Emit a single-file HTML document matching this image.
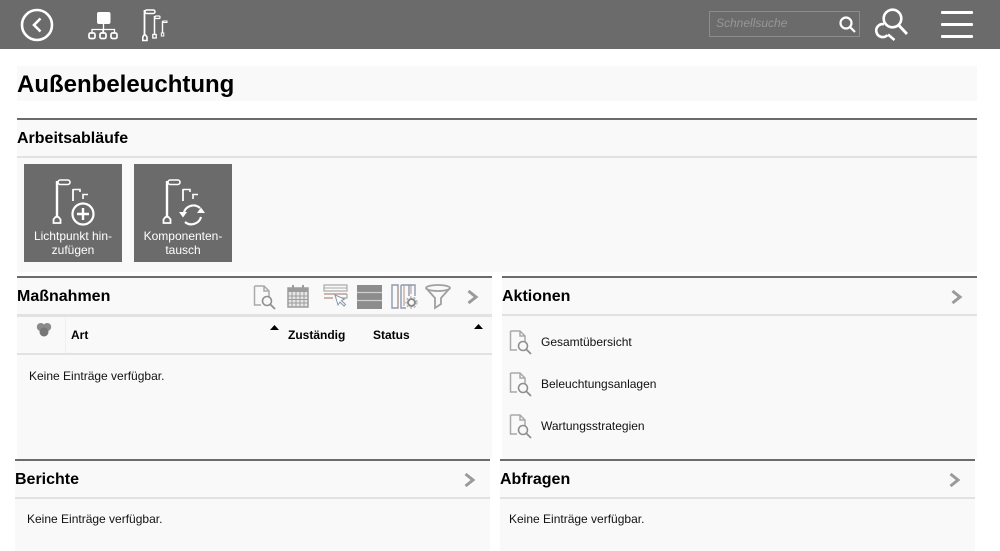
<!DOCTYPE html>
<html lang="de"><head><meta charset="utf-8"><title>Außenbeleuchtung</title>
<style>
html,body{margin:0;padding:0;background:#fff;width:1000px;height:551px;overflow:hidden}
body{position:relative;font-family:"Liberation Sans",sans-serif;color:#000}
div,span,svg{position:absolute}
svg{overflow:visible;fill:none}
.band{background:#f9f9f9}
.dk{background:#6b6b6b}
.lt{background:#e2e2e2}
.h{font-weight:bold;font-size:16px;line-height:20px;white-space:nowrap}
.t{font-size:12px;line-height:14px;white-space:nowrap;color:#111}
.th{font-size:12px;font-weight:bold;line-height:14px;white-space:nowrap}
.btn{background:#6b6b6b;width:98px;height:98px;top:164px;color:#fff;font-size:12px;line-height:14px;text-align:center}
.btn span{left:0;width:98px;top:65px}
.w{stroke:#fff;stroke-width:2}
</style></head><body>
<svg width="0" height="0" style="left:0;top:0">
<defs>
<g id="doc"><path d="M1.500 1H11L16 6V12M11 1V6H16M8 20H1.500V1" stroke="#a9a9ad" stroke-width="1.500" fill="none"/><circle cx="14" cy="16" r="4.500" stroke="#8f8f8f" stroke-width="1.600" fill="none"/><path d="M17.500 19.500L22 24" stroke="#8f8f8f" stroke-width="1.800"/></g>
<path id="chev" d="M1.500 1L9 7L1.500 13" stroke="#9a9a9a" stroke-width="3" fill="none"/>
<g id="poles" stroke="#fff" fill="none"><path d="M3 2V38" stroke-width="2.400"/><rect x="4" y="1" width="12" height="4.500" rx="2.200" stroke-width="1.600"/><path d="M-0.500 44V40.500L1.500 38H4.500L6.500 40.500V44Z" stroke-width="1.800"/><path d="M19 10V22" stroke-width="1.800"/><path d="M19 10.500H26V13" stroke-width="1.600"/><path d="M29 20V15.500H34" stroke-width="1.600"/></g>
</defs></svg>

<!-- top bar -->
<div class="dk" style="left:0;top:0;width:1000px;height:49px"></div>
<svg style="left:20px;top:8px" width="34" height="34"><circle cx="17" cy="17" r="15" class="w" style="stroke-width:2.600"/><path d="M20.500 10.500L14 17L20.500 23.500" class="w" style="stroke-width:2.600"/></svg>
<svg style="left:88px;top:11px" width="30" height="29"><rect x="9" y="1" width="13.500" height="12" rx="2" fill="#fff"/><path d="M15.500 13V22M4 22V18.500H26.500V22M15 18.500V22" stroke="#fff" stroke-width="1.300"/><rect x="1" y="22" width="6" height="5.500" rx="1.500" stroke="#fff" stroke-width="1.700"/><rect x="12" y="22" width="6" height="5.500" rx="1.500" stroke="#fff" stroke-width="1.700"/><rect x="23" y="22" width="6" height="5.500" rx="1.500" stroke="#fff" stroke-width="1.700"/></svg>
<svg style="left:142px;top:9px" width="26" height="32" stroke="#fff" fill="none"><path d="M2.500 1V26" stroke-width="1.800"/><rect x="3" y="1" width="10" height="3.500" rx="1.700" stroke-width="1.500"/><path d="M0.800 31.500V28L2 26H3.500L5 28V31.500Z" stroke-width="1.600"/><path d="M12.500 7V25" stroke-width="1.500"/><rect x="13" y="7" width="5" height="2.500" rx="1" stroke-width="1.200"/><rect x="10.800" y="25.500" width="3.400" height="3.500" stroke-width="1.300"/><path d="M20.500 12V24" stroke-width="1.400"/><rect x="21" y="12" width="4" height="1.500" stroke-width="1"/><rect x="19.300" y="24" width="2.500" height="3" stroke-width="1"/></svg>

<!-- search -->
<div style="left:709px;top:11px;width:149px;height:24px;border:1px solid #8c8c8c"></div>
<div style="left:716px;top:15px;font-size:12px;line-height:16px;font-style:italic;color:#979797;white-space:nowrap">Schnellsuche</div>
<svg style="left:838px;top:15px" width="18" height="18"><circle cx="8" cy="8" r="5.500" class="w" style="stroke-width:2.200"/><path d="M12 12L17 17" class="w" style="stroke-width:2.200"/></svg>
<svg style="left:874px;top:9px" width="36" height="32"><circle cx="18.500" cy="9.500" r="8.800" stroke="#fff" stroke-width="2.600"/><path d="M24.500 16L33 25" class="w" style="stroke-width:2.800"/><path d="M10 15.200A6.500 6.500 0 1 0 13.500 26" class="w" style="stroke-width:2.600"/><path d="M14 25.500L20.500 31" class="w" style="stroke-width:2.600"/></svg>
<div style="left:941px;top:11px;width:32px;height:3px;background:#fff;border-radius:1px"></div>
<div style="left:941px;top:23px;width:32px;height:3px;background:#fff;border-radius:1px"></div>
<div style="left:941px;top:35px;width:32px;height:3px;background:#fff;border-radius:1px"></div>

<!-- title -->
<div class="band" style="left:17px;top:66px;width:960px;height:35px"></div>
<div style="left:17px;top:70px;font-size:24px;line-height:30px;font-weight:bold;white-space:nowrap">Außenbeleuchtung</div>

<!-- Arbeitsabläufe -->
<div class="band" style="left:17px;top:120px;width:960px;height:152px"></div>
<div class="dk" style="left:17px;top:118px;width:960px;height:2px"></div>
<div class="lt" style="left:17px;top:156px;width:960px;height:2px"></div>
<div class="h" style="left:17px;top:129px">Arbeitsabläufe</div>

<div class="btn" style="left:24px">
<svg style="left:30px;top:15px" width="40" height="46"><use href="#poles"/><circle cx="29" cy="35" r="10.500" stroke="#fff" stroke-width="2.200"/><path d="M29 29V41M23 35H35" stroke="#fff" stroke-width="2.400"/></svg>
<span>Lichtpunkt hin-<br>zufügen</span>
</div>
<div class="btn" style="left:134px">
<svg style="left:30px;top:15px" width="46" height="46"><use href="#poles"/><path d="M20 33A10 10 0 0 1 36 29M37 38A10 10 0 0 1 21 43" stroke="#fff" stroke-width="2.200"/><path d="M15 33H23L19 38.500ZM33 34H41L37 28.500Z" fill="#fff"/></svg>
<span>Komponenten-<br>tausch</span>
</div>

<!-- Maßnahmen -->
<div class="band" style="left:17px;top:278px;width:475px;height:181px"></div>
<div class="dk" style="left:17px;top:276px;width:475px;height:2px"></div>
<div class="h" style="left:17px;top:287px">Maßnahmen</div>
<svg style="left:253px;top:285px" width="24" height="25"><use href="#doc"/></svg>
<svg style="left:287px;top:284px" width="23" height="25"><rect x="1" y="4" width="20" height="19" fill="#e6e6e6" stroke="#9c9c9c" stroke-width="1.500"/><rect x="1" y="4" width="20" height="4" fill="#9c9c9c"/><path d="M1 12H21M1 15.500H21M1 19H21M5 8V23M9 8V23M13 8V23M17 8V23" stroke="#9c9c9c"/><path d="M6 1V6M16 1V6" stroke="#9c9c9c" stroke-width="2"/></svg>
<svg style="left:323px;top:284px" width="25" height="24"><rect x="1" y="1" width="23" height="6" stroke="#a9a9a9" stroke-width="1.200"/><path d="M1 4H24" stroke="#a9a9a9"/><path d="M1 10H24M1 14H10" stroke="#b08f80" stroke-width="1.200"/><path d="M24 10V14H16" stroke="#a9a9a9" stroke-width="1.200"/><path d="M12 11L15 21L17 18L21 22L22.500 20.500L18.500 16.500L21.500 15Z" fill="#fff" stroke="#8497ab"/></svg>
<svg style="left:357px;top:285px" width="25" height="24"><rect width="25" height="24" fill="#8c8c8c"/><path d="M0 7.500H25M0 15.500H25" stroke="#cfcfcf" stroke-width="1.200"/></svg>
<svg style="left:391px;top:284px" width="26" height="25"><path d="M1 1V24H7V1ZM10 1V24H15M18 1V12M10 1H24V12" stroke="#8d9bb0" stroke-width="1.400"/><path d="M7 1V24M13 1V22M20 1V10" stroke="#b58f80"/><circle cx="20.500" cy="18.500" r="3.500" stroke="#8a8a8a" stroke-width="2"/><circle cx="20.500" cy="18.500" r="5.500" stroke="#9a9a9a" stroke-dasharray="2 2"/></svg>
<svg style="left:425px;top:284px" width="26" height="25"><ellipse cx="13" cy="4" rx="12" ry="3" stroke="#a0a0a0" stroke-width="1.800"/><path d="M1 4L10 14V24L16 20V14L25 4" stroke="#a0a0a0" stroke-width="1.800"/></svg>
<svg style="left:467px;top:290px" width="12" height="14"><use href="#chev"/></svg>
<div style="left:17px;top:314px;width:475px;height:3px;background:#e2e2e2"></div>
<div style="left:65px;top:317px;width:1px;height:36px;background:#f0f0f0"></div>
<div style="left:17px;top:353px;width:475px;height:2px;background:#e2e2e2"></div>
<svg style="left:36px;top:322px" width="16" height="16"><circle cx="4.800" cy="5" r="4" fill="#8a8a8a"/><circle cx="11.200" cy="5" r="4" fill="#8a8a8a"/><circle cx="8" cy="10" r="4.500" fill="#777"/></svg>
<div class="th" style="left:71px;top:328px">Art</div>
<div class="th" style="left:288px;top:328px">Zuständig</div>
<div class="th" style="left:373px;top:328px">Status</div>
<svg style="left:270px;top:325px" width="9" height="5"><path d="M0 5H9L4.500 0Z" fill="#000"/></svg>
<svg style="left:474px;top:324px" width="9" height="5"><path d="M0 5H9L4.500 0Z" fill="#000"/></svg>
<div class="t" style="left:29px;top:369px">Keine Einträge verfügbar.</div>

<!-- Aktionen -->
<div class="band" style="left:502px;top:278px;width:475px;height:181px"></div>
<div class="dk" style="left:502px;top:276px;width:475px;height:2px"></div>
<div class="lt" style="left:502px;top:314px;width:475px;height:2px"></div>
<div class="h" style="left:502px;top:287px">Aktionen</div>
<svg style="left:951px;top:290px" width="12" height="14"><use href="#chev"/></svg>
<svg style="left:509px;top:330px" width="24" height="25"><use href="#doc"/></svg>
<svg style="left:509px;top:372px" width="24" height="25"><use href="#doc"/></svg>
<svg style="left:509px;top:414px" width="24" height="25"><use href="#doc"/></svg>
<div class="t" style="left:541px;top:335px">Gesamtübersicht</div>
<div class="t" style="left:541px;top:377px">Beleuchtungsanlagen</div>
<div class="t" style="left:541px;top:419px">Wartungsstrategien</div>

<!-- Berichte -->
<div class="band" style="left:15px;top:461px;width:475px;height:90px"></div>
<div class="dk" style="left:15px;top:459px;width:475px;height:2px"></div>
<div class="lt" style="left:15px;top:497px;width:475px;height:2px"></div>
<div class="h" style="left:15px;top:470px">Berichte</div>
<svg style="left:464px;top:473px" width="12" height="14"><use href="#chev"/></svg>
<div class="t" style="left:27px;top:512px">Keine Einträge verfügbar.</div>

<!-- Abfragen -->
<div class="band" style="left:500px;top:461px;width:475px;height:90px"></div>
<div class="dk" style="left:500px;top:459px;width:475px;height:2px"></div>
<div class="lt" style="left:500px;top:497px;width:475px;height:2px"></div>
<div class="h" style="left:500px;top:470px">Abfragen</div>
<svg style="left:949px;top:473px" width="12" height="14"><use href="#chev"/></svg>
<div class="t" style="left:509px;top:512px">Keine Einträge verfügbar.</div>
</body></html>
